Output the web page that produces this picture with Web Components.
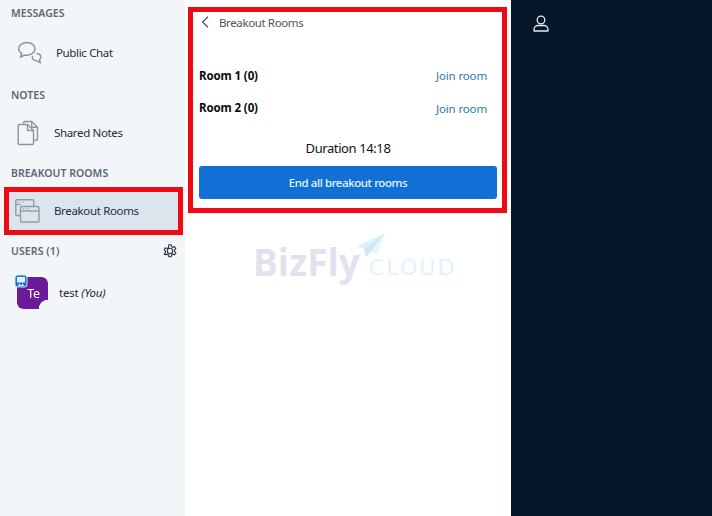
<!DOCTYPE html>
<html lang="en">
<head>
<meta charset="utf-8">
<title>Breakout Rooms</title>
<style>
  html, body { margin: 0; height: 100%; }
  body { overflow: hidden; font-family: "Noto Sans", "Open Sans", sans-serif; color: #1b2a3a; }
</style>
</head>
<body>

<app-shell>
  <side-bar slot="side">
    <side-heading>MESSAGES</side-heading>
    <side-item label="Public Chat" icon="chat" gap="13" style="--row:64px;--after:2px"></side-item>
    <side-heading>NOTES</side-heading>
    <side-item label="Shared Notes" icon="notes" gap="15" style="--row:60px;--after:2px"></side-item>
    <side-heading>BREAKOUT ROOMS</side-heading>
    <side-item label="Breakout Rooms" icon="rooms" gap="14" active></side-item>
    <users-head></users-head>
    <user-row name="test" initials="Te"></user-row>
  </side-bar>

  <breakout-panel slot="main">
    <room-row name="Room 1 (0)"></room-row>
    <room-row name="Room 2 (0)"></room-row>
  </breakout-panel>

  <profile-rail slot="rail"></profile-rail>
</app-shell>

<script>
// small helper so each component only has to give its css + markup
function shadow(el, html) {
    el.attachShadow({ mode: 'open' });
    el.shadowRoot.innerHTML = html;
}

const ICONS = {
    chat: `<svg width="26" height="24" viewBox="0 0 26 24" fill="none" stroke="#8b96a3" stroke-width="1.4">
        <path d="M10 1.5c-4.600 0-8.300 2.800-8.300 6.300 0 2 1.200 3.700 3 4.900L3.600 16l4.300-2c.7.100 1.400.2 2.100.2 4.600 0 8-2.900 8-6.400S14.600 1.500 10 1.500z"/>
        <path d="M19.500 12.500c2.500.2 4.400 1.700 4.400 3.600 0 1-.6 1.900-1.400 2.500l.7 3-3.200-1.700c-2.300 0-4.700-1.500-4.700-3.500 0-.5.100-1 .4-1.400"/>
    </svg>`,
    notes: `<svg width="22" height="26" viewBox="0 0 22 26" fill="none" stroke="#8b96a3" stroke-width="1.4" stroke-linejoin="round">
        <path d="M6.500 3.500V2.700c0-.7.500-1.200 1.200-1.200h7l5.800 5.800V19c0 .7-.5 1.200-1.200 1.200h-2"/>
        <path d="M2.200 4.500h8.300l6 6v13c0 .6-.5 1-1 1H2.200c-.6 0-1-.4-1-1V5.500c0-.6.400-1 1-1z"/>
        <path d="M10.500 4.500v6h6M14.700 1.500v5.800h5.800"/>
    </svg>`,
    rooms: `<svg width="25" height="24" viewBox="0 0 25 24" fill="none" stroke="#8f9ba8" stroke-width="1.4">
        <path d="M5.500 16.500H2c-.7 0-1.200-.5-1.200-1.200V2c0-.7.500-1.200 1.200-1.200h15.500c.7 0 1.200.5 1.200 1.200v5.500"/>
        <path d="M.8 5.500h4.700"/>
        <rect x="5.500" y="7.500" width="18.500" height="15.500" rx="1.200"/>
        <path d="M5.500 12h18.500"/>
        <path d="M8 9.800h1M10.500 9.800h1M13 9.800h1M3 3.200h1M5.500 3.200h1M8 3.200h1" stroke-width="1"/>
    </svg>`
};

class AppShell extends HTMLElement {
    constructor() {
        super();
        shadow(this, `<style>
            :host { display: grid; grid-template-columns: 185px 326px 201px; height: 516px; width: 712px; }
        </style>
        <slot name="side"></slot><slot name="main"></slot><slot name="rail"></slot>`);
    }
}
customElements.define('app-shell', AppShell);

class SideBar extends HTMLElement {
    constructor() {
        super();
        shadow(this, `<style>
            :host { display: flex; flex-direction: column; background: #f3f6f9; padding-top: 5px; box-sizing: border-box; height: 516px; }
        </style><slot></slot>`);
    }
}
customElements.define('side-bar', SideBar);

class SideHeading extends HTMLElement {
    constructor() {
        super();
        shadow(this, `<style>
            :host { display: block; padding-left: 11px; height: 16px; line-height: 16px;
                font-size: 10.500px; font-weight: 600; color: #5b6876; letter-spacing: .03px; white-space: nowrap; }
        </style><slot></slot>`);
    }
}
customElements.define('side-heading', SideHeading);

class SideItem extends HTMLElement {
    constructor() {
        super();
        const active = this.hasAttribute('active');
        const gap = this.getAttribute('gap') || 12;
        shadow(this, `<style>
            :host { display: block; margin-bottom: var(--after, 0); }
            .row { display: flex; align-items: center; height: var(--row, 38px); padding-left: 17px; box-sizing: border-box;
                font-size: 11.500px; letter-spacing: -.35px; color: #1f2d3d; white-space: nowrap; }
            .row svg { flex: none; display: block; }
            .active { margin: 6px 2px 0 4px; height: 48px; padding-left: 6px; border: 5px solid #ee0a12; background: #dce4ed; }
            .label { margin: 0 0 2px ${gap}px; }
        </style>
        <div class="row ${active ? 'active' : ''}">${ICONS[this.getAttribute('icon')]}<span class="label">${this.getAttribute('label')}</span></div>`);
    }
}
customElements.define('side-item', SideItem);

class UsersHead extends HTMLElement {
    constructor() {
        super();
        shadow(this, `<style>
            :host { display: flex; align-items: center; justify-content: space-between; height: 16px; margin-top: 8px;
                padding: 0 8px 0 11px; font-size: 10.500px; font-weight: 600; color: #5b6876; letter-spacing: .1px; }
            svg { display: block; }
        </style>
        <span>USERS (1)</span>
        <svg width="14" height="14" viewBox="0 0 14 14" fill="none" stroke="#2b3744" stroke-width="1.100">
            <path d="M5.800.8h2.400l.4 1.800 1.300.7 1.700-.6 1.200 2.100-1.300 1.200v1.500l1.300 1.200-1.200 2.100-1.700-.6-1.300.7-.4 1.800H5.800l-.4-1.800-1.300-.7-1.700.6L1.200 9.900l1.300-1.200V7.200L1.200 6l1.200-2.100 1.700.6 1.300-.7z"/>
            <circle cx="7" cy="7" r="2.700"/>
        </svg>`);
    }
}
customElements.define('users-head', UsersHead);

class UserRow extends HTMLElement {
    constructor() {
        super();
        shadow(this, `<style>
            :host { display: flex; align-items: center; margin-top: 18px; padding-left: 17px; font-size: 11.500px; letter-spacing: -.2px; color: #1f2d3d; }
            .avatar { width: 31px; height: 32px; flex: none; display: flex; align-items: center; justify-content: center;
                padding-left: 2px; box-sizing: border-box; color: #fff; font-size: 12.500px; border-radius: 6px; background: #6a1b9a;
                -webkit-mask: radial-gradient(circle at 100% 100%, transparent 9px, #000 9.500px); mask: radial-gradient(circle at 100% 100%, transparent 9px, #000 9.500px); }
            .wrap { position: relative; flex: none; }
            .badge { position: absolute; left: -3px; top: -3px; display: block; }
            .name { margin: 0 0 2px 11px; }
            i { font-style: italic; }
        </style>
        <div class="wrap">
            <div class="avatar">${this.getAttribute('initials')}</div>
            <svg class="badge" width="14" height="14" viewBox="0 0 14 14">
                <rect x=".5" y=".5" width="13" height="13" rx="3.500" fill="#cfe3f5"/>
                <rect x="1.500" y="1.500" width="11" height="11" rx="2.500" fill="#1a73c9"/>
                <rect x="3" y="3" width="8" height="5.500" fill="#e3f0fb"/>
                <path d="M4 11.500h6M5.500 9.500v2M8.500 9.500v2" stroke="#e3f0fb" stroke-width="1"/>
            </svg>
        </div>
        <span class="name">${this.getAttribute('name')} <i>(You)</i></span>`);
    }
}
customElements.define('user-row', UserRow);

class BreakoutPanel extends HTMLElement {
    constructor() {
        super();
        shadow(this, `<style>
            :host { display: block; background: #fff; height: 516px; }
            .frame { margin: 7px 4px 0 3px; height: 206px; box-sizing: border-box; border: 5px solid #ee0a12; padding: 0 5px 9px 6px;
                display: flex; flex-direction: column; }
            .top { display: flex; align-items: center; height: 20px; font-size: 11.500px; letter-spacing: -.38px; color: #4a5663; flex: none; padding-left: 2px; }
            .top svg { display: block; margin-right: 10px; }
            .rooms { margin-top: 28px; flex: none; }
            .duration { margin-top: 15px; text-align: center; font-size: 13px; letter-spacing: -.4px; color: #111; line-height: 18px; }
            button { margin-top: 9px; height: 33px; border: 0; border-radius: 3px; background: #1170d6; color: #e8f4ff; font: inherit;
                font-size: 11.500px; letter-spacing: -.42px; padding: 0; font-weight: 500; }
            .logo { display: flex; align-items: flex-start; margin-top: 20px; height: 52px; position: relative; padding-left: 68px; }
            .biz { font-family: "Open Sans", sans-serif; font-weight: 700; font-size: 37px; color: #e3e1ee; line-height: 52px; margin-top: 3px; }
            .cloud { font-family: "DejaVu Sans", sans-serif; font-size: 22px; color: #dff4fb; line-height: 30px; margin: 20px 0 0 9px; letter-spacing: 2.100px; }
            .plane { position: absolute; left: 172px; top: 0; }
        </style>
        <div class="frame">
            <div class="top">
                <svg width="8" height="12" viewBox="0 0 8 12" fill="none" stroke="#46525f" stroke-width="1.200"><path d="M7 .7 1.500 6 7 11.300"/></svg>
                Breakout Rooms
            </div>
            <div class="rooms"><slot></slot></div>
            <div class="duration">Duration 14:18</div>
            <button>End all breakout rooms</button>
        </div>
        <div class="logo">
            <span class="biz">BizFly</span><span class="cloud">CLOUD</span>
            <svg class="plane" width="28" height="25" viewBox="0 0 28 25">
                <path d="M28 0 0 13l7 3z" fill="#dff1f8"/>
                <path d="M28 0 7 16l2 8 5-5z" fill="#cde9f4"/>
                <path d="M28 0 14 19l6 2z" fill="#e8f6fb"/>
            </svg>
        </div>`);
    }
}
customElements.define('breakout-panel', BreakoutPanel);

class RoomRow extends HTMLElement {
    constructor() {
        super();
        shadow(this, `<style>
            :host { display: flex; justify-content: space-between; align-items: center; height: 32px; padding-right: 10px;
                font-size: 11.500px; }
            b { color: #0b0b0b; font-weight: 700; letter-spacing: -.12px; margin-bottom: 2px; }
            a { color: #2f7aa8; letter-spacing: -.15px; text-decoration: none; }
            :host(:first-child) a { margin-bottom: 2px; }
        </style>
        <b>${this.getAttribute('name')}</b><a>Join room</a>`);
    }
}
customElements.define('room-row', RoomRow);

class ProfileRail extends HTMLElement {
    constructor() {
        super();
        shadow(this, `<style>
            :host { display: block; background: #06172a; height: 516px; padding: 15px 0 0 22px; box-sizing: border-box; }
            svg { display: block; }
        </style>
        <svg width="16" height="17" viewBox="0 0 16 17" fill="none" stroke="#e8eaed" stroke-width="1.300">
            <circle cx="8" cy="5" r="3.800"/>
            <path d="M1 16v-1.500c0-2.200 1.800-4 4-4h6c2.200 0 4 1.800 4 4V16z" stroke-linejoin="round"/>
        </svg>`);
    }
}
customElements.define('profile-rail', ProfileRail);
</script>
</body>
</html>
